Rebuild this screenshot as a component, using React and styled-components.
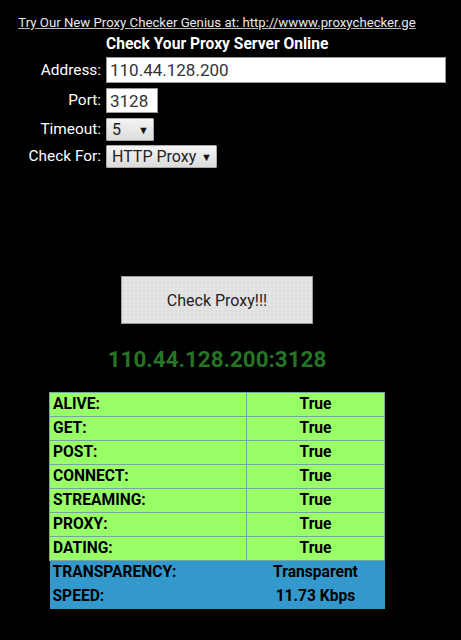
import React from 'react'
import styled, { createGlobalStyle } from 'styled-components'

const Global = createGlobalStyle`
  html, body {
    margin: 0;
    background: #000;
  }
  body {
    font-family: Roboto, 'Liberation Sans', sans-serif;
  }
`

const Page = styled.div`
  width: 434px;
  padding-top: 14px;
  display: flex;
  flex-direction: column;
  align-items: center;
`

const Promo = styled.a`
  font-size: 13.2px;
  line-height: 18px;
  color: #e8e8e8;
  text-decoration: underline;
  text-decoration-color: #bbb;
`

const FormGrid = styled.div`
  align-self: flex-start;
  display: grid;
  grid-template-columns: 101px auto;
  column-gap: 5px;
  align-items: center;
`

const Title = styled.div`
  grid-column: 2;
  font-size: 15.6px;
  font-weight: bold;
  line-height: 22px;
  color: #fff;
  margin: 1px 0 2px;
`

const Label = styled.label`
  grid-column: 1;
  text-align: right;
  color: #fff;
  font-size: 15.4px;
  line-height: ${p => p.$h}px;
  margin-top: ${p => p.$gap}px;
`

const TextInput = styled.input`
  grid-column: 2;
  box-sizing: border-box;
  width: ${p => p.$w}px;
  height: ${p => p.$h}px;
  margin-top: ${p => p.$gap}px;
  border: 1px solid #9a9a9a;
  background: #fff;
  padding: 0 3px;
  font-family: Roboto, 'Liberation Sans', sans-serif;
  font-size: 17px;
  color: #333;
  outline: none;
`

const SelectWrap = styled.div`
  grid-column: 2;
  position: relative;
  width: ${p => p.$w}px;
  height: ${p => p.$h}px;
  margin-top: ${p => p.$gap}px;
`

const Select = styled.select`
  appearance: none;
  box-sizing: border-box;
  width: 100%;
  height: 100%;
  border: 1px solid #a8a8a8;
  border-radius: 1px;
  background: linear-gradient(#f4f4f4, #dcdcdc);
  padding: 0 0 0 5px;
  font-family: Roboto, 'Liberation Sans', sans-serif;
  font-size: 16px;
  color: #222;
  outline: none;
`

const Arrow = styled.span`
  position: absolute;
  right: 5px;
  top: 50%;
  transform: translateY(-50%);
  font-size: 11px;
  color: #111;
  pointer-events: none;
`

const CheckButton = styled.button`
  margin-top: 108px;
  width: 192px;
  height: 48px;
  border: 1px solid #9c9c9c;
  background-color: #e4e4e4;
  background-image: radial-gradient(#d2d2d2 0.6px, transparent 0.8px);
  background-size: 4px 4px;
  font-family: Roboto, 'Liberation Sans', sans-serif;
  font-size: 16px;
  color: #222;
`

const ResultHost = styled.div`
  margin-top: 22px;
  font-size: 22.4px;
  font-weight: bold;
  line-height: 26px;
  color: #267526;
`

const ResultTable = styled.table`
  margin-top: 20px;
  width: 336px;
  border-collapse: collapse;
  font-size: 15.6px;
  font-weight: bold;
  color: #000;
`

const Cell = styled.td`
  height: 24px;
  box-sizing: border-box;
  padding: 0 3px;
  line-height: 21px;
  background: ${p => (p.$blue ? '#3399cc' : '#99ff66')};
  border: ${p => (p.$blue ? 'none' : '1px solid #78a4a0')};
  text-align: ${p => (p.$center ? 'center' : 'left')};
  width: ${p => (p.$center ? '138px' : 'auto')};
`

const checks = [
  ['ALIVE:', 'True'],
  ['GET:', 'True'],
  ['POST:', 'True'],
  ['CONNECT:', 'True'],
  ['STREAMING:', 'True'],
  ['PROXY:', 'True'],
  ['DATING:', 'True'],
]

const details = [
  ['TRANSPARENCY:', 'Transparent'],
  ['SPEED:', '11.73 Kbps'],
]

export default function App() {
  return (
    <>
      <Global />
      <Page>
        <Promo href="#">Try Our New Proxy Checker Genius at: http://wwww.proxychecker.ge</Promo>
        <FormGrid>
          <Title>Check Your Proxy Server Online</Title>
          <Label $h={26}>Address:</Label>
          <TextInput $w={340} $h={26} defaultValue="110.44.128.200" />
          <Label $h={25} $gap={5}>Port:</Label>
          <TextInput $w={52} $h={25} $gap={5} defaultValue="3128" />
          <Label $h={23} $gap={5}>Timeout:</Label>
          <SelectWrap $w={48} $h={23} $gap={5}>
            <Select defaultValue="5">
              <option>5</option>
              <option>10</option>
            </Select>
            <Arrow>▼</Arrow>
          </SelectWrap>
          <Label $h={23} $gap={4}>Check For:</Label>
          <SelectWrap $w={111} $h={23} $gap={4}>
            <Select defaultValue="HTTP Proxy">
              <option>HTTP Proxy</option>
              <option>SOCKS Proxy</option>
            </Select>
            <Arrow>▼</Arrow>
          </SelectWrap>
        </FormGrid>
        <CheckButton>Check Proxy!!!</CheckButton>
        <ResultHost>110.44.128.200:3128</ResultHost>
        <ResultTable>
          <tbody>
            {checks.map(([k, v]) => (
              <tr key={k}>
                <Cell>{k}</Cell>
                <Cell $center>{v}</Cell>
              </tr>
            ))}
            {details.map(([k, v]) => (
              <tr key={k}>
                <Cell $blue>{k}</Cell>
                <Cell $blue $center>{v}</Cell>
              </tr>
            ))}
          </tbody>
        </ResultTable>
      </Page>
    </>
  )
}
